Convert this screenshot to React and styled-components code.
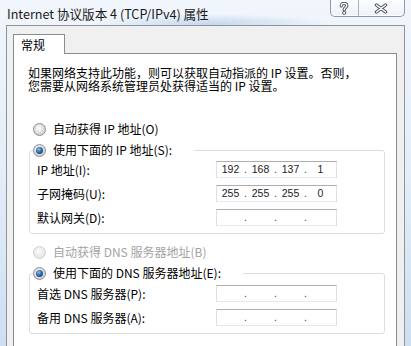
import React from 'react';
import styled, { createGlobalStyle } from 'styled-components';

const GlobalStyle = createGlobalStyle`
  html, body {
    margin: 0;
    padding: 0;
  }
  body {
    width: 411px;
    height: 346px;
    overflow: hidden;
    background: #d6e4f3;
  }
`;

const Window = styled.div`
  width: 411px;
  height: 346px;
  display: flex;
  flex-direction: column;
  overflow: hidden;
  font-family: "Noto Sans CJK SC", sans-serif;
  background:
    radial-gradient(ellipse 120px 10px at 210px 24px, rgba(120, 160, 210, 0.35), rgba(120, 160, 210, 0) 100%),
    linear-gradient(180deg, #f1f6fc 0%, #e4edf8 50%, #cddff1 100%);
`;

const TitleBar = styled.div`
  height: 25px;
  flex-shrink: 0;
  display: flex;
  align-items: flex-start;
  padding: 0 6px 0 7px;
`;

const Title = styled.div`
  margin-top: 6px;
  font-size: 12.6px;
  line-height: 16px;
  color: #1a1a1a;
  white-space: nowrap;
`;

const CaptionButtons = styled.div`
  margin-left: auto;
  width: 75px;
  height: 17px;
  box-sizing: border-box;
  display: flex;
  border: 1px solid #8f98a4;
  border-top: none;
  border-radius: 0 0 5px 5px;
  background: linear-gradient(180deg, rgba(255, 255, 255, 0.75), rgba(235, 241, 248, 0.6));
  box-shadow: inset 0 -1px 0 rgba(255, 255, 255, 0.8);
`;

const CaptionButton = styled.div`
  width: ${p => p.$width}px;
  display: flex;
  align-items: center;
  justify-content: center;
  border-left: ${p => (p.$divider ? '1px solid #a9b3bf' : 'none')};
`;

const Client = styled.div`
  flex: 1;
  display: flex;
  flex-direction: column;
  margin: 0 6px;
  padding: 8px 7px 0 6px;
  background: #f0f0f0;
  border: 1px solid #8d949c;
  border-bottom: none;
`;

const TabStrip = styled.div`
  display: flex;
  position: relative;
  z-index: 1;
`;

const Tab = styled.div`
  width: 52px;
  height: 20px;
  box-sizing: border-box;
  padding: 1px 0 0 7px;
  margin-bottom: -1px;
  background: #fff;
  border: 1px solid #898c95;
  border-bottom: none;
  font-size: 12px;
  line-height: 18px;
  color: #000;
`;

const Panel = styled.div`
  flex: 1;
  display: flex;
  flex-direction: column;
  padding: 12px 11px 0 15px;
  background: #fff;
  border: 1px solid #898c95;
  border-bottom: none;
`;

const Description = styled.p`
  margin: 0 0 0 -1px;
  font-size: 12px;
  line-height: 13px;
  color: #000;
  white-space: nowrap;
`;

const RadioRow = styled.label`
  display: flex;
  align-items: center;
  gap: 7px;
  height: 16px;
  margin-top: ${p => p.$top || 0}px;
  padding-left: ${p => (p.$inLegend ? 0 : 4)}px;
  font-size: 12px;
  line-height: 16px;
  white-space: nowrap;
  color: ${p => (p.$disabled ? '#a3a3a3' : '#000')};
`;

const RadioDot = styled.span`
  position: relative;
  width: 13px;
  height: 13px;
  box-sizing: border-box;
  flex-shrink: 0;
  border-radius: 50%;
  border: 1px solid ${p => (p.$disabled ? '#cfd2d6' : '#8c9097')};
  background: ${p =>
    p.$disabled
      ? 'radial-gradient(circle at 45% 40%, #fbfbfb, #e6e6e6 70%)'
      : 'radial-gradient(circle at 45% 40%, #ffffff 0%, #d9d9d9 55%, #c2c2c2 100%)'};

  &::after {
    content: '';
    display: ${p => (p.$checked ? 'block' : 'none')};
    position: absolute;
    left: 2px;
    top: 2px;
    width: 7px;
    height: 7px;
    border-radius: 50%;
    background: radial-gradient(circle at 40% 35%, #8fc2ef 0%, #2b6aa8 45%, #0f2f55 100%);
  }
`;

const Group = styled.fieldset`
  margin: ${p => p.$top || 0}px 0 0 0;
  padding: ${p => p.$padTop}px 0 7px 0;
  min-width: 0;
  border: 1px solid #d5dfe5;
  border-radius: 3px;
`;

const Legend = styled.legend`
  margin-left: 3px;
  padding: 0 22px 0 0;
`;

const Fields = styled.div`
  display: grid;
  grid-template-columns: 179px 121px;
  row-gap: 7px;
  align-items: center;
  padding-left: 7px;
`;

const FieldLabel = styled.span`
  font-size: 12px;
  line-height: 17px;
  color: #000;
  white-space: nowrap;
`;

const IpBox = styled.div`
  height: 17px;
  box-sizing: border-box;
  display: grid;
  grid-template-columns: 25px 5px 25px 5px 25px 5px 25px;
  align-items: center;
  justify-items: center;
  padding-left: 1px;
  background: #fff;
  border: 1px solid #dde1e7;
  border-top-color: #abadb3;
  border-bottom-color: #e3e9ef;
  font-family: "Liberation Sans", Arial, sans-serif;
  font-size: 10.5px;
  line-height: 15px;
  color: #222;
`;

const Dot = styled.span`
  color: #444;
`;

function IpField({ value }) {
  const parts = value ? value.split('.') : ['', '', '', ''];
  return (
    <IpBox>
      {parts.map((part, i) => (
        <React.Fragment key={i}>
          {i > 0 && <Dot>.</Dot>}
          <span>{part}</span>
        </React.Fragment>
      ))}
    </IpBox>
  );
}

function Radio({ checked, disabled, label, top, inLegend }) {
  return (
    <RadioRow $disabled={disabled} $top={top} $inLegend={inLegend}>
      <RadioDot $checked={checked} $disabled={disabled} />
      {label}
    </RadioRow>
  );
}

const HelpIcon = () => (
  <svg width="10" height="13" viewBox="0 0 10 13">
    <g fill="none" strokeLinecap="round" strokeLinejoin="round">
      <path d="M2.2 4 C2.2 2 3.6 1.3 5 1.3 C6.6 1.3 7.8 2.3 7.8 3.7 C7.8 5.2 5.4 5.6 5.2 7.4 L5.2 8" stroke="#4d5460" strokeWidth="3.2" />
      <path d="M2.2 4 C2.2 2 3.6 1.3 5 1.3 C6.6 1.3 7.8 2.3 7.8 3.7 C7.8 5.2 5.4 5.6 5.2 7.4 L5.2 8" stroke="#fff" strokeWidth="1.3" />
    </g>
    <circle cx="5.2" cy="10.8" r="1.6" fill="#fff" stroke="#4d5460" strokeWidth="1" />
  </svg>
);

const CloseIcon = () => (
  <svg width="14" height="11" viewBox="0 0 14 11">
    <g strokeLinecap="round">
      <path d="M2.5 2 L11.5 9 M11.5 2 L2.5 9" stroke="#4d5460" strokeWidth="3.4" />
      <path d="M2.5 2 L11.5 9 M11.5 2 L2.5 9" stroke="#fff" strokeWidth="1.4" />
    </g>
  </svg>
);

export default function App() {
  return (
    <Window>
      <GlobalStyle />
      <TitleBar>
        <Title>Internet 协议版本 4 (TCP/IPv4) 属性</Title>
        <CaptionButtons>
          <CaptionButton $width={27}>
            <HelpIcon />
          </CaptionButton>
          <CaptionButton $width={46} $divider>
            <CloseIcon />
          </CaptionButton>
        </CaptionButtons>
      </TitleBar>

      <Client>
        <TabStrip>
          <Tab>常规</Tab>
        </TabStrip>
        <Panel>
          <Description>
            如果网络支持此功能，则可以获取自动指派的 IP 设置。否则，
            <br />
            您需要从网络系统管理员处获得适当的 IP 设置。
          </Description>

          <Radio label="自动获得 IP 地址(O)" top={29} />
          <Group $top={5} $padTop={3}>
            <Legend>
              <Radio checked inLegend label="使用下面的 IP 地址(S):" />
            </Legend>
            <Fields>
              <FieldLabel>IP 地址(I):</FieldLabel>
              <IpField value="192.168.137.1" />
              <FieldLabel>子网掩码(U):</FieldLabel>
              <IpField value="255.255.255.0" />
              <FieldLabel>默认网关(D):</FieldLabel>
              <IpField />
            </Fields>
          </Group>

          <Radio disabled label="自动获得 DNS 服务器地址(B)" top={10} />
          <Group $top={5} $padTop={4}>
            <Legend>
              <Radio checked inLegend label="使用下面的 DNS 服务器地址(E):" />
            </Legend>
            <Fields>
              <FieldLabel>首选 DNS 服务器(P):</FieldLabel>
              <IpField />
              <FieldLabel>备用 DNS 服务器(A):</FieldLabel>
              <IpField />
            </Fields>
          </Group>
        </Panel>
      </Client>
    </Window>
  );
}
